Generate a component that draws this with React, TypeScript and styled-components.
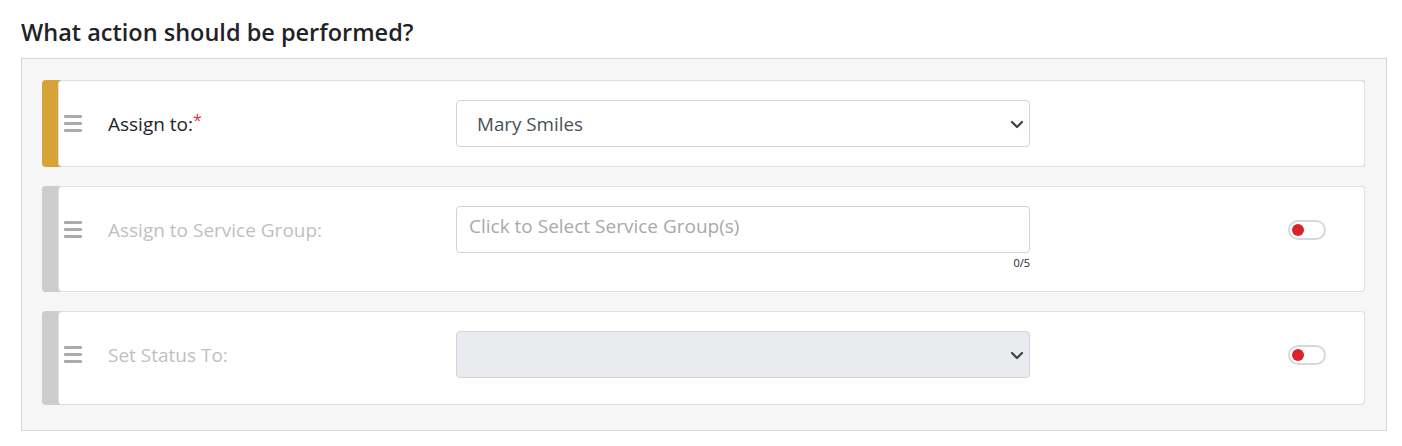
import React from "react";
import styled, { createGlobalStyle } from "styled-components";

const GlobalStyle = createGlobalStyle`
  html, body {
    margin: 0;
    padding: 0;
    background: #ffffff;
    font-family: "Open Sans", "Noto Sans", sans-serif;
  }
`;

const Page = styled.div`
  padding: 14px 15px 15px 21px;
  width: 1366px;
`;

const Title = styled.h2`
  margin: 0 0 8px 0;
  font-size: 23.5px;
  font-weight: 600;
  line-height: 36px;
  color: #1f2328;
`;

const Panel = styled.div`
  background: #f6f6f6;
  border: 1px solid #d4d4dc;
  padding: 21px 21px 25px 20px;
  display: flex;
  flex-direction: column;
  gap: 19px;
`;

const Row = styled.div<{ $accent: string }>`
  display: flex;
  background: ${(p) => p.$accent};
  border-radius: 4px;
`;

const Card = styled.div<{ $bottom: number }>`
  flex: 1;
  margin-left: 16px;
  background: #ffffff;
  border: 1px solid #dee2e6;
  border-radius: 4px;
  padding: 19px 38px ${(p) => p.$bottom}px 5px;
  display: flex;
  align-items: flex-start;
`;

const Handle = styled.div`
  width: 18px;
  height: 47px;
  display: flex;
  flex-direction: column;
  justify-content: center;
  gap: 4px;
  margin-right: 26px;

  span {
    display: block;
    height: 3px;
    background: #ababab;
    border-radius: 1px;
  }
`;

const Label = styled.div<{ $muted: boolean }>`
  width: 348px;
  height: 47px;
  display: flex;
  align-items: center;
  font-size: 19px;
  color: ${(p) => (p.$muted ? "#bfbfbf" : "#212529")};
`;

const Required = styled.span`
  color: #dc3545;
  align-self: flex-start;
  margin-top: 9px;
  font-size: 16px;
`;

const Control = styled.div`
  width: 574px;
  display: flex;
  flex-direction: column;
`;

const Field = styled.div<{ $disabled?: boolean }>`
  height: 47px;
  box-sizing: border-box;
  border: 1px solid #ced4da;
  border-radius: 4px;
  background: ${(p) => (p.$disabled ? "#e9ebef" : "#ffffff")};
  display: flex;
  align-items: center;
  justify-content: space-between;
  padding: 0 5px 0 20px;
  font-size: 18.8px;
  color: #495057;
`;

const Placeholder = styled.span`
  color: #a9a9a9;
  margin-left: -8px;
  margin-top: -7px;
  font-size: 19px;
`;

const Counter = styled.div`
  text-align: right;
  font-size: 11px;
  line-height: 19px;
  color: #212529;
`;

const Spacer = styled.div`
  flex: 1;
`;

const SwitchWrap = styled.div`
  height: 47px;
  display: flex;
  align-items: center;
`;

const Switch = styled.div`
  width: 38px;
  height: 20px;
  box-sizing: border-box;
  border: 2px solid #d5d8dd;
  border-radius: 10px;
  background: #ffffff;
  display: flex;
  align-items: center;
  padding-left: 2px;

  &::before {
    content: "";
    width: 12px;
    height: 12px;
    border-radius: 50%;
    background: #dc2226;
  }
`;

const Chevron = () => (
  <svg width="14" height="10" viewBox="0 0 14 10">
    <path d="M2 3l5 5 5-5" fill="none" stroke="#3d4248" strokeWidth="2.2" strokeLinecap="round" strokeLinejoin="round" />
  </svg>
);

const DragHandle = () => (
  <Handle>
    <span />
    <span />
    <span />
  </Handle>
);

export default function App(): React.JSX.Element {
  return (
    <>
      <GlobalStyle />
      <Page>
        <Title>What action should be performed?</Title>
        <Panel>
          <Row $accent="#d6a339">
            <Card $bottom={19}>
              <DragHandle />
              <Label $muted={false}>
                Assign to:<Required>*</Required>
              </Label>
              <Control>
                <Field>
                  <span>Mary Smiles</span>
                  <Chevron />
                </Field>
              </Control>
            </Card>
          </Row>
          <Row $accent="#cccccc">
            <Card $bottom={19}>
              <DragHandle />
              <Label $muted>Assign to Service Group:</Label>
              <Control>
                <Field>
                  <Placeholder>Click to Select Service Group(s)</Placeholder>
                </Field>
                <Counter>0/5</Counter>
              </Control>
              <Spacer />
              <SwitchWrap>
                <Switch />
              </SwitchWrap>
            </Card>
          </Row>
          <Row $accent="#cccccc">
            <Card $bottom={26}>
              <DragHandle />
              <Label $muted>Set Status To:</Label>
              <Control>
                <Field $disabled>
                  <span />
                  <Chevron />
                </Field>
              </Control>
              <Spacer />
              <SwitchWrap>
                <Switch />
              </SwitchWrap>
            </Card>
          </Row>
        </Panel>
      </Page>
    </>
  );
}
